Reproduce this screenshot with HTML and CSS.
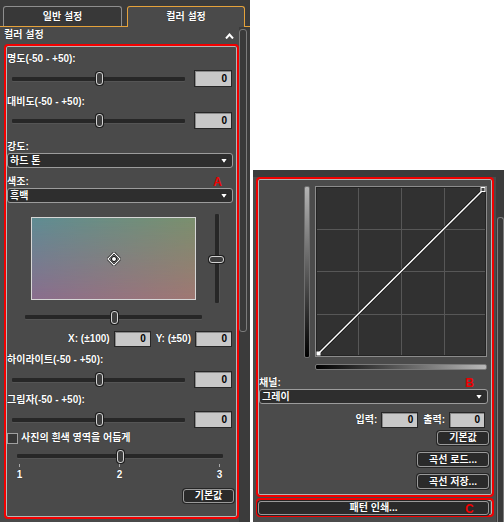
FILE: index.html
```html
<!DOCTYPE html>
<html lang="ko">
<head>
<meta charset="utf-8">
<title>컬러 설정</title>
<link rel="stylesheet" href="styles.css">
</head>
<body>
<div class="page">
  <div class="left">
    <div class="tabs">
      <div class="tab">일반 설정</div>
      <div class="tab active">컬러 설정</div>
    </div>
    <div class="lbody">
      <div class="lmain">
        <div class="sechead">
          <span>컬러 설정</span>
          <svg class="caret" width="9" height="6" viewBox="0 0 9 6"><polyline points="1,5.5 4.5,1.5 8,5.5" fill="none" stroke="#fff" stroke-width="2"/></svg>
        </div>
        <div class="redbox boxa">
          <div class="lbl m7">명도(-50 - +50):</div>
          <div class="slrow m5">
            <div class="slider sl-main"><div class="track"></div><div class="knob"></div></div>
            <div class="num">0</div>
          </div>
          <div class="lbl m9">대비도(-50 - +50):</div>
          <div class="slrow m4">
            <div class="slider sl-main"><div class="track"></div><div class="knob"></div></div>
            <div class="num">0</div>
          </div>
          <div class="lbl m12">강도:</div>
          <div class="dd m5"><span>하드 톤</span><svg width="8" height="6" viewBox="0 0 8 6"><polygon points="0.5,0.5 7.5,0.5 4,5.5" fill="#fff" stroke="#111" stroke-width="0.8"/></svg></div>
          <div class="lbl lblrow m8"><span>색조:</span><span class="mark">A</span></div>
          <div class="dd m4"><span>흑백</span><svg width="8" height="6" viewBox="0 0 8 6"><polygon points="0.5,0.5 7.5,0.5 4,5.5" fill="#fff" stroke="#111" stroke-width="0.8"/></svg></div>
          <div class="colorrow m11">
            <div class="grad">
              <svg class="cross" width="14" height="14" viewBox="0 0 14 14">
                <polygon points="7,0.9 13.1,7 7,13.1 0.9,7" fill="none" stroke="#000" stroke-width="2.4"/>
                <polygon points="7,0.9 13.1,7 7,13.1 0.9,7" fill="none" stroke="#fff" stroke-width="1.2"/>
                <circle cx="7" cy="7" r="2.5" fill="#fff" stroke="#000" stroke-width="1"/>
              </svg>
            </div>
            <div class="vslider"><div class="vtrack"></div><div class="vknob"></div></div>
          </div>
          <div class="slider sl-h m7"><div class="track"></div><div class="knob"></div></div>
          <div class="xyrow m7">
            <span>X: (±100)</span><div class="num n37">0</div>
            <span class="ylbl">Y: (±50)</span><div class="num n37">0</div>
          </div>
          <div class="lbl m7">하이라이트(-50 - +50):</div>
          <div class="slrow m5">
            <div class="slider sl-main"><div class="track"></div><div class="knob"></div></div>
            <div class="num">0</div>
          </div>
          <div class="lbl m6">그림자(-50 - +50):</div>
          <div class="slrow m5">
            <div class="slider sl-main"><div class="track"></div><div class="knob"></div></div>
            <div class="num">0</div>
          </div>
          <div class="chkrow m4"><div class="chk"></div><span>사진의 흰색 영역을 어둡게</span></div>
          <div class="slider sl-5 m6"><div class="track"></div><div class="knob"></div></div>
          <div class="ticks m2">
            <div class="tk"><i></i><span>1</span></div>
            <div class="tk"><i></i><span>2</span></div>
            <div class="tk"><i></i><span>3</span></div>
          </div>
          <div class="btn btn-def m8">기본값</div>
        </div>
      </div>
      <div class="lscroll"><div class="thumb"></div></div>
    </div>
  </div>

  <div class="right">
    <div class="rtop"></div>
    <div class="rbody">
      <div class="rmain">
        <div class="redbox boxb">
          <div class="curverow">
            <div class="vbar"></div>
            <svg class="graph" width="172" height="171" viewBox="0 0 172 171">
              <rect x="0.5" y="0.5" width="171" height="170" fill="#313131" stroke="#8c8c8c"/>
              <rect x="1.5" y="1.5" width="169" height="168" fill="none" stroke="#242424"/>
              <g stroke="#575757" stroke-width="1">
                <line x1="43.5" y1="2" x2="43.5" y2="169"/>
                <line x1="86.5" y1="2" x2="86.5" y2="169"/>
                <line x1="129.5" y1="2" x2="129.5" y2="169"/>
                <line x1="2" y1="43.5" x2="170" y2="43.5"/>
                <line x1="2" y1="85.5" x2="170" y2="85.5"/>
                <line x1="2" y1="128.5" x2="170" y2="128.5"/>
              </g>
              <line x1="4" y1="167" x2="168" y2="4" stroke="#111" stroke-width="3"/>
              <line x1="4" y1="167" x2="168" y2="4" stroke="#fff" stroke-width="1.5"/>
              <rect x="1.5" y="165.5" width="4" height="4" fill="#fff"/>
              <rect x="166" y="1.5" width="4" height="4" fill="#444" stroke="#fff" stroke-width="1"/>
            </svg>
          </div>
          <div class="hbar"></div>
          <div class="lbl lblrow rlbl m7"><span>채널:</span><span class="mark">B</span></div>
          <div class="dd m5"><span>그레이</span><svg width="8" height="6" viewBox="0 0 8 6"><polygon points="0.5,0.5 7.5,0.5 4,5.5" fill="#fff" stroke="#111" stroke-width="0.8"/></svg></div>
          <div class="iorow m8">
            <span>입력:</span><div class="num n37">0</div>
            <span class="olbl">출력:</span><div class="num n36">0</div>
          </div>
          <div class="btn rb-def m3">기본값</div>
          <div class="btn rb-wide m7">곡선 로드...</div>
          <div class="btn rb-wide m7">곡선 저장...</div>
        </div>
        <div class="redbox boxc">
          <div class="btn btn-print">패턴 인쇄...</div>
          <span class="mark cmark">C</span>
        </div>
      </div>
      <div class="rscroll"><div class="rthumb"></div></div>
    </div>
  </div>
</div>
</body>
</html>
```

FILE: styles.css
```css
* { box-sizing: border-box; }
html, body { margin: 0; padding: 0; }
body {
  background: #fff;
  width: 504px;
  height: 522px;
  overflow: hidden;
  font: bold 10px/12px "Liberation Sans", "Noto Sans CJK KR", sans-serif;
  color: #fff;
  text-shadow: 0 0 1px rgba(0, 0, 0, 0.7);
}
.page { display: flex; align-items: flex-start; width: 504px; height: 522px; }

/* ---------- left panel ---------- */
.left {
  width: 250px;
  height: 522px;
  background: #3b3b3b;
  display: flex;
  flex-direction: column;
}
.tabs {
  height: 27px;
  display: flex;
  align-items: flex-start;
  padding: 6px 0 0 3px;
  gap: 5px;
  border-bottom: 1px solid #e5a23b;
}
.tab {
  width: 119px;
  height: 20px;
  border: 1px solid #8e8e8e;
  border-bottom: none;
  border-radius: 3px 3px 0 0;
  background: #383838;
  text-align: center;
  line-height: 20px;
}
.tab.active {
  width: 118px;
  height: 21px;
  border-color: #e5a23b;
  background: #4a4a4a;
  margin-bottom: -1px;
}
.lbody { flex: 1; display: flex; }
.lmain { width: 239px; background: #4a4a4a; padding-left: 4px; }
.lscroll { width: 9px; padding-top: 2px; }
.thumb {
  width: 8px;
  height: 303px;
  border: 1px solid #7c7c7c;
  border-radius: 3px;
  background: #3a3a3a;
}
.sechead {
  height: 17px;
  display: flex;
  justify-content: space-between;
  align-items: flex-start;
  padding: 2px 5px 0 0;
}
.caret { margin-top: 4px; }

.redbox {
  border: 2px solid #f20000;
  border-radius: 4px;
  box-shadow: inset 0 0 0 1px #b4b4b4;
}
.boxa {
  width: 235px;
  height: 475px;
  display: flex;
  flex-direction: column;
}
.m2 { margin-top: 2px; }
.m3 { margin-top: 3px; }
.m4 { margin-top: 4px; }
.m5 { margin-top: 5px; }
.m6 { margin-top: 6px; }
.m7 { margin-top: 7px; }
.m8 { margin-top: 8px; }
.m9 { margin-top: 9px; }
.m11 { margin-top: 11px; }
.m12 { margin-top: 12px; }

.lbl { height: 12px; padding-left: 1px; white-space: nowrap; }
.lblrow { display: flex; justify-content: space-between; padding-right: 15px; }
.mark {
  color: #ee0000;
  font: bold 12px/12px "Liberation Sans", sans-serif;
  text-shadow: none;
}

.slrow { height: 17px; display: flex; align-items: center; }
.slider { position: relative; display: flex; align-items: center; }
.sl-main { margin-left: 6px; width: 173px; height: 17px; }
.sl-h { margin-left: 19px; width: 177px; height: 14px; }
.sl-5 { margin-left: 11px; width: 206px; height: 12px; }
.track {
  width: 100%;
  height: 4px;
  background: #272727;
  border-radius: 1px;
  box-shadow: 0 1px 0 #555;
}
.knob {
  position: absolute;
  left: calc(50% - 3px);
  top: calc(50% - 6.5px);
  width: 7px;
  height: 13px;
  border: 1px solid #d2d2d2;
  border-radius: 3px;
  background: #3e3e3e;
  box-shadow: 0 0 0 1px #1e1e1e;
}
.num {
  margin-left: 9px;
  width: 38px;
  height: 17px;
  background: #c8c8c8;
  border: 1px solid #262626;
  box-shadow: inset 1px 1px 0 #8a8a8a;
  color: #000;
  text-shadow: none;
  text-align: right;
  padding-right: 4px;
  line-height: 15px;
}
.n37 { width: 37px; margin-left: 0; height: 16px; line-height: 14px; }
.n36 { width: 36px; margin-left: 0; height: 16px; line-height: 14px; }

.dd {
  margin: 0 4px 0 1px;
  height: 15px;
  background: #2e2e2e;
  border: 1px solid #9c9c9c;
  border-radius: 3px;
  display: flex;
  justify-content: space-between;
  align-items: center;
  padding: 0 4px 0 2px;
  line-height: 13px;
}

.colorrow { height: 89px; display: flex; align-items: flex-start; }
.grad {
  position: relative;
  margin: 3px 0 0 25px;
  width: 165px;
  height: 83px;
  border: 1px solid #d6d6d6;
  background: linear-gradient(to right, #8a6e8e, #a07873);
  display: flex;
  justify-content: center;
  align-items: center;
}
.grad::before {
  content: "";
  position: absolute;
  inset: 0;
  background: linear-gradient(to right, #5f8c93, #7a8f6d);
  -webkit-mask-image: linear-gradient(to bottom, #000, rgba(0,0,0,0));
  mask-image: linear-gradient(to bottom, #000, rgba(0,0,0,0));
}
.cross { position: relative; }
.vslider {
  position: relative;
  margin-left: 13px;
  width: 15px;
  height: 89px;
  display: flex;
  justify-content: center;
}
.vtrack {
  width: 4px;
  height: 100%;
  background: #272727;
  border-radius: 1px;
  box-shadow: 1px 0 0 #555;
}
.vknob {
  position: absolute;
  left: 0;
  top: calc(50% - 3px);
  width: 15px;
  height: 7px;
  border: 1px solid #d2d2d2;
  border-radius: 3px;
  background: #3e3e3e;
  box-shadow: 0 0 0 1px #1e1e1e;
}

.xyrow {
  height: 16px;
  display: flex;
  justify-content: flex-end;
  align-items: center;
  gap: 4px;
  padding-right: 5px;
  white-space: nowrap;
}
.ylbl { margin-left: 1px; }

.chkrow { height: 12px; display: flex; align-items: center; }
.chk {
  margin-left: 1px;
  width: 11px;
  height: 11px;
  border: 1px solid #a0a0a0;
  background: #363636;
}
.chkrow span { margin-left: 3px; white-space: nowrap; }

.ticks {
  margin-left: 9px;
  width: 209px;
  display: flex;
  justify-content: space-between;
}
.tk { width: 9px; display: flex; flex-direction: column; align-items: center; }
.tk i { display: block; width: 1px; height: 3px; background: #a8a8a8; }
.tk span { margin-top: 2px; line-height: 12px; }

.btn {
  height: 14px;
  background: #2a2a2a;
  border: 1px solid #9a9a9a;
  border-radius: 3px;
  text-align: center;
  line-height: 12px;
  white-space: nowrap;
  box-shadow: 0 0 0 1px #262626;
}
.btn-def { align-self: flex-end; width: 51px; margin-right: 3px; }

/* ---------- right panel ---------- */
.right {
  width: 251px;
  height: 352px;
  margin: 170px 0 0 3px;
  background: #3b3b3b;
  display: flex;
  flex-direction: column;
}
.rtop { height: 7px; }
.rbody { flex: 1; display: flex; }
.rmain { width: 243px; background: #4b4b4b; padding-left: 3px; }
.rscroll { flex: 1; padding: 40px 0 0 1px; display: flex; }
.rthumb {
  flex: 1;
  border: 1px solid #7c7c7c;
  border-bottom: none;
  border-radius: 3px 3px 0 0;
  background: #3a3a3a;
}
.boxb {
  width: 238px;
  height: 320px;
  display: flex;
  flex-direction: column;
}
.curverow { margin-top: 7px; height: 172px; display: flex; align-items: flex-start; }
.vbar {
  margin-left: 46px;
  width: 6px;
  height: 172px;
  border: 1px solid #6e6e6e;
  border-radius: 2px;
  background: linear-gradient(to bottom, #b4b4b4, #000);
}
.graph { margin-left: 5px; display: block; }
.hbar {
  margin: 6px 0 0 57px;
  width: 172px;
  height: 6px;
  border: 1px solid #7a7a7a;
  border-radius: 2px;
  background: linear-gradient(to right, #000, #b8b8b8);
}
.rlbl { padding-right: 18px; }
.iorow {
  height: 16px;
  display: flex;
  justify-content: flex-end;
  align-items: center;
  gap: 4px;
  padding-right: 7px;
  white-space: nowrap;
}
.olbl { margin-left: 1px; }
.rb-def { align-self: flex-end; width: 52px; margin-right: 3px; }
.rb-wide { align-self: flex-end; width: 72px; margin-right: 3px; height: 15px; line-height: 13px; }
.boxc {
  position: relative;
  margin-top: 1px;
  width: 238px;
  height: 19px;
  padding: 1px 3px 0 0;
}
.btn-print { width: 231px; }
.cmark { position: absolute; left: 207px; top: 3px; }
```
